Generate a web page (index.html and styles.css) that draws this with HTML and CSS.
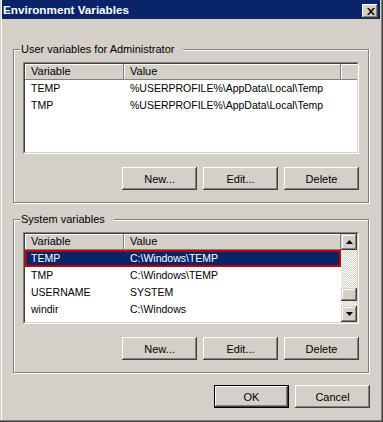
FILE: index.html
```html
<!DOCTYPE html>
<html>
<head>
<meta charset="utf-8">
<link rel="stylesheet" href="styles.css">
</head>
<body>
<div class="window">
  <div class="titlebar">
    <span class="title">Environment Variables</span>
    <div class="close">
      <svg width="8" height="7" viewBox="0 0 8 7"><path d="M0 0h2l2 2.4 2-2.4h2l-3 3.5 3 3.5h-2l-2-2.4-2 2.4h-2l3-3.5z" fill="#000"/></svg>
    </div>
  </div>
  <div class="content">
    <div class="group">
      <div class="group-title">User variables for Administrator</div>
      <div class="list">
        <div class="list-inner">
          <div class="list-view">
            <div class="header">
              <div class="hcell c1">Variable</div>
              <div class="hcell c2">Value</div>
              <div class="hcell c3"></div>
            </div>
            <div class="row"><div class="cell c1">TEMP</div><div class="cell c2">%USERPROFILE%\AppData\Local\Temp</div></div>
            <div class="row"><div class="cell c1">TMP</div><div class="cell c2">%USERPROFILE%\AppData\Local\Temp</div></div>
          </div>
        </div>
      </div>
      <div class="buttons">
        <div class="btn">New...</div>
        <div class="btn">Edit...</div>
        <div class="btn">Delete</div>
      </div>
    </div>

    <div class="group group-system">
      <div class="group-title">System variables</div>
      <div class="list">
        <div class="list-inner">
          <div class="list-view">
            <div class="header">
              <div class="hcell c1">Variable</div>
              <div class="hcell c2">Value</div>
            </div>
            <div class="row selected"><div class="cell c1">TEMP</div><div class="cell c2">C:\Windows\TEMP</div></div>
            <div class="row"><div class="cell c1">TMP</div><div class="cell c2">C:\Windows\TEMP</div></div>
            <div class="row"><div class="cell c1">USERNAME</div><div class="cell c2">SYSTEM</div></div>
            <div class="row"><div class="cell c1">windir</div><div class="cell c2">C:\Windows</div></div>
          </div>
          <div class="scrollbar">
            <div class="sb-btn"><svg width="7" height="4" viewBox="0 0 7 4"><polygon points="0,4 7,4 3.5,0" fill="#000"/></svg></div>
            <div class="sb-track-top"></div>
            <div class="sb-thumb"></div>
            <div class="sb-track-bottom"></div>
            <div class="sb-btn"><svg width="7" height="4" viewBox="0 0 7 4"><polygon points="0,0 7,0 3.5,4" fill="#000"/></svg></div>
          </div>
        </div>
      </div>
      <div class="buttons">
        <div class="btn">New...</div>
        <div class="btn">Edit...</div>
        <div class="btn">Delete</div>
      </div>
    </div>

    <div class="dialog-buttons">
      <div class="btn btn-default">OK</div>
      <div class="btn">Cancel</div>
    </div>
  </div>
</div>
</body>
</html>
```

FILE: styles.css
```css
html, body {
  margin: 0;
  padding: 0;
  background: #d4d0c8;
}

.window {
  width: 383px;
  height: 422px;
  box-sizing: border-box;
  padding: 0 3px 3px 2px;
  background: #d4d0c8;
  display: flex;
  flex-direction: column;
  box-shadow: inset -1px -1px #404040, inset -2px -2px #808080, inset 1px 0 #d4d0c8, inset 2px 0 #ffffff;
  font-family: "Liberation Sans", Arial, sans-serif;
  font-size: 11px;
  color: #000;
}

.titlebar {
  height: 19px;
  flex: none;
  background: #0a246a;
  display: flex;
  align-items: flex-start;
  justify-content: space-between;
  padding: 0 2px 0 1px;
}

.title {
  color: #fff;
  font-weight: bold;
  font-size: 11.7px;
  line-height: 19px;
  white-space: nowrap;
}

.close {
  width: 16px;
  height: 14px;
  margin-top: 4px;
  box-sizing: border-box;
  background: #d4d0c8;
  display: flex;
  align-items: center;
  justify-content: center;
  padding-left: 1px;
  box-shadow: inset -1px -1px #404040, inset 1px 1px #ffffff, inset -2px -2px #808080, inset 2px 2px #d4d0c8;
}

.close svg {
  display: block;
}

.content {
  flex: 1;
  display: flex;
  flex-direction: column;
  padding: 30px 11px 0 11px;
}

.group {
  border: 1px solid #808080;
  box-shadow: inset 1px 1px #ffffff, 1px 1px #ffffff;
  padding: 0 9px 12px 9px;
  display: flex;
  flex-direction: column;
}

.group-system {
  margin-top: 16px;
}

.group-title {
  align-self: flex-start;
  margin: -7px 0 6px -3px;
  padding: 0 9px 0 1px;
  background: #d4d0c8;
  line-height: 13px;
  white-space: nowrap;
}

.list {
  height: 92px;
  box-sizing: border-box;
  border: 1px solid;
  border-color: #808080 #ffffff #ffffff #808080;
  display: flex;
}

.list-inner {
  flex: 1;
  border: 1px solid;
  border-color: #404040 #d4d0c8 #d4d0c8 #404040;
  background: #fff;
  display: flex;
  overflow: hidden;
}

.list-view {
  flex: 1;
  min-width: 0;
  display: flex;
  flex-direction: column;
  overflow: hidden;
}

.header {
  display: flex;
  height: 16px;
  flex: none;
}

.hcell {
  box-sizing: border-box;
  background: #d4d0c8;
  border-right: 1px solid #808080;
  border-bottom: 1px solid #808080;
  box-shadow: inset 1px 1px #ffffff;
  padding-left: 6px;
  line-height: 15px;
  white-space: nowrap;
}

.c1 {
  width: 99px;
  flex: none;
}

.c2 {
  width: 217px;
  flex: none;
}

.c3 {
  flex: 1;
  border-right: 0;
}

.row {
  display: flex;
  height: 17px;
  flex: none;
  align-self: flex-start;
}

.cell {
  box-sizing: border-box;
  padding-left: 6px;
  font-size: 10.5px;
  line-height: 17px;
  white-space: nowrap;
  overflow: hidden;
}

.row.selected {
  background: #0a246a;
  color: #fff;
  box-shadow: inset 0 0 0 2px #c00000;
}

.scrollbar {
  width: 16px;
  flex: none;
  display: flex;
  flex-direction: column;
  background-color: #d4d0c8;
  background-image: conic-gradient(#ffffff 25%, #d4d0c8 0 50%, #ffffff 0 75%, #d4d0c8 0);
  background-size: 2px 2px;
}

.sb-btn {
  height: 16px;
  flex: none;
  box-sizing: border-box;
  background: #d4d0c8;
  box-shadow: inset -1px -1px #404040, inset 1px 1px #d4d0c8, inset -2px -2px #808080, inset 2px 2px #ffffff;
  display: flex;
  align-items: center;
  justify-content: center;
}

.sb-btn svg {
  display: block;
}

.sb-track-top {
  height: 38px;
  flex: none;
}

.sb-thumb {
  height: 13px;
  flex: none;
  background: #d4d0c8;
  box-shadow: inset -1px -1px #404040, inset 1px 1px #d4d0c8, inset -2px -2px #808080, inset 2px 2px #ffffff;
}

.sb-track-bottom {
  flex: 1;
}

.buttons {
  display: flex;
  justify-content: flex-end;
  gap: 6px;
  margin-top: 13px;
}

.btn {
  width: 75px;
  height: 23px;
  box-sizing: border-box;
  background: #d4d0c8;
  box-shadow: inset -1px -1px #404040, inset 1px 1px #ffffff, inset -2px -2px #808080, inset 2px 2px #d4d0c8;
  display: flex;
  align-items: center;
  justify-content: center;
  white-space: nowrap;
}

.btn-default {
  border: 1px solid #000;
  box-shadow: inset -1px -1px #404040, inset 1px 1px #ffffff, inset -2px -2px #808080, inset 2px 2px #d4d0c8;
}

.dialog-buttons {
  display: flex;
  justify-content: flex-end;
  gap: 6px;
  margin-top: 12px;
  margin-right: -1px;
}
```
